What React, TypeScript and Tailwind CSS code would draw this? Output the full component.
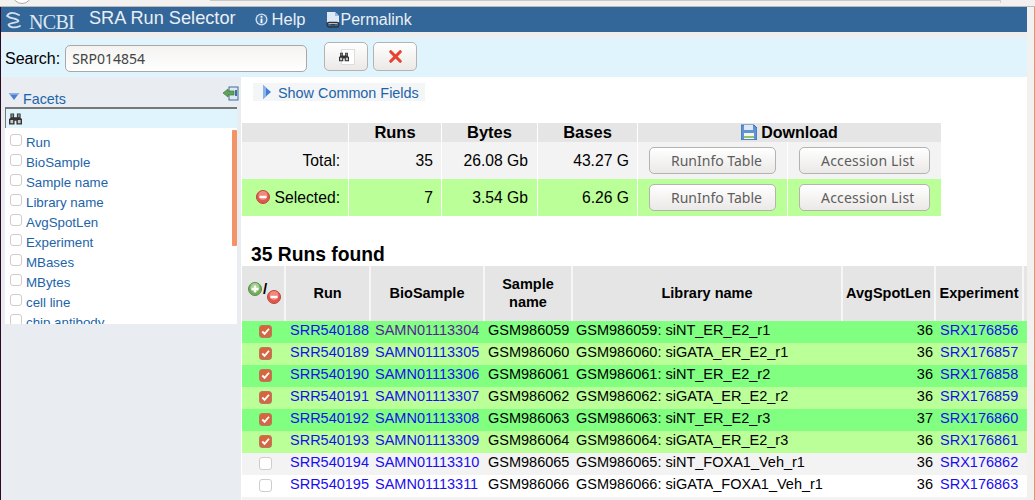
import { X } from "lucide-react";

const facets = ["Run", "BioSample", "Sample name", "Library name", "AvgSpotLen", "Experiment", "MBases", "MBytes", "cell line", "chip antibody"];

const runs = [
  { run: "SRR540188", bio: "SAMN01113304", gsm: "GSM986059", lib: "siNT_ER_E2_r1", len: 36, exp: "SRX176856", bg: "bg-[#80ff80]", on: true, visited: true },
  { run: "SRR540189", bio: "SAMN01113305", gsm: "GSM986060", lib: "siGATA_ER_E2_r1", len: 36, exp: "SRX176857", bg: "bg-[#bbff99]", on: true },
  { run: "SRR540190", bio: "SAMN01113306", gsm: "GSM986061", lib: "siNT_ER_E2_r2", len: 36, exp: "SRX176858", bg: "bg-[#80ff80]", on: true },
  { run: "SRR540191", bio: "SAMN01113307", gsm: "GSM986062", lib: "siGATA_ER_E2_r2", len: 36, exp: "SRX176859", bg: "bg-[#bbff99]", on: true },
  { run: "SRR540192", bio: "SAMN01113308", gsm: "GSM986063", lib: "siNT_ER_E2_r3", len: 37, exp: "SRX176860", bg: "bg-[#80ff80]", on: true },
  { run: "SRR540193", bio: "SAMN01113309", gsm: "GSM986064", lib: "siGATA_ER_E2_r3", len: 36, exp: "SRX176861", bg: "bg-[#bbff99]", on: true },
  { run: "SRR540194", bio: "SAMN01113310", gsm: "GSM986065", lib: "siNT_FOXA1_Veh_r1", len: 36, exp: "SRX176862", bg: "bg-[#f3f3f3]", on: false },
  { run: "SRR540195", bio: "SAMN01113311", gsm: "GSM986066", lib: "siGATA_FOXA1_Veh_r1", len: 36, exp: "SRX176863", bg: "bg-white", on: false },
  { run: "", bio: "", gsm: "", lib: "", len: 0, exp: "", bg: "bg-[#f3f3f3]", on: false, spacer: true },
];

function Binoculars({ className }: { className?: string }) {
  return (
    <svg viewBox="0 0 14 12" className={className}>
      <path d="M1.500 0h4v4h3V0h4v5L14 6v6H8V8H6v4H0V6l1.500-1z" fill="#333333" />
      <path d="M2.500 1h2v3h-2zM9.500 1h2v3h-2z" fill="#8a8a8a" />
      <path d="M1.500 7h3v3.500h-3zM9.500 7h3v3.500h-3z" fill="#c8c8c8" />
    </svg>
  );
}

function MinusCircle({ className }: { className?: string }) {
  return (
    <svg viewBox="0 0 14 14" className={className}>
      <circle cx="7" cy="7" r="6.500" fill="#e2574c" stroke="#b8483f" />
      <circle cx="7" cy="5.500" r="4.500" fill="#f08a80" />
      <rect x="3.500" y="5.800" width="7" height="2.400" fill="#fff" />
    </svg>
  );
}

function PlusCircle({ className }: { className?: string }) {
  return (
    <svg viewBox="0 0 14 14" className={className}>
      <circle cx="7" cy="7" r="6.500" fill="#72ad5c" stroke="#5b8e48" />
      <circle cx="7" cy="5.500" r="4.500" fill="#a5cf92" />
      <path d="M5.800 3.500h2.400v2.300h2.300v2.400H8.200v2.300H5.800V8.200H3.500V5.800h2.300z" fill="#fff" />
    </svg>
  );
}

function Check({ on }: { on: boolean }) {
  if (!on) {
    return <span className="block w-[13px] h-[13px] mx-auto rounded-[3px] bg-white border border-[#cfcdca]" />;
  }
  return (
    <span className="flex items-center justify-center w-[13px] h-[13px] mx-auto rounded-[3px] bg-gradient-to-b from-[#d9643a] to-[#cf6a45] border border-[#b9795f]">
      <svg viewBox="0 0 12 12" className="w-[11px] h-[11px]">
        <path d="M2.500 6l2.500 2.500L9.800 3" fill="none" stroke="#fff" strokeWidth="2" />
      </svg>
    </span>
  );
}

function DownloadButton({ label, wide }: { label: string; wide?: boolean }) {
  return (
    <button className={`block h-[27px] ${wide ? "w-[131px] tracking-[0.2px]" : "w-[127px]"} rounded-[5px] border border-[#b5b3b0] bg-gradient-to-b from-white to-[#ebe9e7] text-[14px] whitespace-nowrap text-[#5e5e5e] pl-[21px] text-left [font-family:'Noto_Sans',sans-serif]`}>
      {label}
    </button>
  );
}

export default function App() {
  return (
    <div className="w-[1035px] h-[500px] overflow-hidden bg-[#f2f1ef] text-black [font-family:'Liberation_Sans',Arial,sans-serif]">
      {/* browser strip */}
      <div className="relative h-[7px] border-b border-[#bdbbb8] overflow-hidden">
        <div className="absolute left-[12px] -top-[16px] w-[20px] h-[20px] rounded-full border border-[#a8a8a8] bg-white" />
        <div className="absolute left-[210px] top-0 w-[790px] h-px bg-[#c8c8c8]" />
        <div className="absolute left-[1000px] top-0 w-px h-[3px] bg-[#d0d0d0]" />
      </div>

      <div className="flex h-[493px]">
        <div className="w-px bg-[#2c0a26]" />
        <div className="w-[1026px] flex flex-col bg-white">
          {/* top bar */}
          <div className="h-[25px] bg-[#336699] flex items-center text-[#e9eff5] shrink-0">
            <svg viewBox="0 0 15 17" className="ml-[5px] w-[15px] h-[17px] relative top-[1px]" fill="none" stroke="#d5e1ec" strokeWidth="1.700" strokeLinecap="round">
              <path d="M1 4C3 0 8 .5 13 3" />
              <path d="M2 4.500C5 7 11 6 12.500 9 12 11 5 10 2.500 12.500 3 15.500 9 16.500 14 14" />
            </svg>
            <span className="ml-[8px] text-[20px] leading-none tracking-[-0.7px] [font-family:'Liberation_Serif',serif] text-[#dfe8f0] relative top-[2px]">NCBI</span>
            <span className="ml-[15px] text-[18.200px] leading-none relative -top-[1px]">SRA Run Selector</span>
            <svg viewBox="0 0 14 14" className="ml-[19px] w-[13px] h-[13px]">
              <circle cx="7" cy="7" r="6.500" fill="#cfe0f0" />
              <circle cx="7" cy="7" r="5" fill="#3f75a8" />
              <rect x="6" y="6" width="2" height="5" fill="#fff" />
              <rect x="6" y="3" width="2" height="2" fill="#fff" />
            </svg>
            <span className="ml-[4px] text-[16.500px] leading-none">Help</span>
            <svg viewBox="0 0 14 16" className="ml-[20px] w-[14px] h-[16px]">
              <path d="M1 0h8l4 4v8H1z" fill="#dfe9f5" />
              <path d="M9 0l4 4H9z" fill="#9fb8d6" />
              <rect x="1" y="10.500" width="12" height="4.500" rx="2.200" fill="none" stroke="#333" strokeWidth="1.300" />
              <rect x="5" y="12.200" width="4" height="1" fill="#333" />
            </svg>
            <span className="ml-[1px] text-[16px] leading-none">Permalink</span>
          </div>
          <div className="h-[6px] bg-[#eeeeee] shrink-0" />

          {/* search bar */}
          <div className="h-[39px] bg-[#e0f4fe] flex items-center shrink-0 pl-[4px]">
            <span className="text-[16px] leading-none relative top-px">Search:</span>
            <input
              readOnly
              value="SRP014854"
              className="ml-[5px] w-[242px] h-[27px] rounded-[5px] border border-[#aaa8a5] bg-gradient-to-b from-[#f4f3f1] to-white px-[6px] text-[14px] text-[#444] outline-none relative top-[1px] [font-family:'Noto_Sans',sans-serif]"
            />
            <button className="ml-[17px] w-[44px] h-[29px] rounded-[5px] border border-[#b5b3b0] bg-gradient-to-b from-white to-[#ebe9e7] flex items-center justify-center relative top-[-1px]">
              <span className="relative flex items-center w-[14px] h-[16px] ml-[3px] bg-white border border-[#dddddd]">
                <Binoculars className="w-[10px] h-[10px] -ml-[3px] shrink-0" />
              </span>
            </button>
            <button className="ml-[5px] w-[44px] h-[29px] rounded-[5px] border border-[#b5b3b0] bg-gradient-to-b from-white to-[#ebe9e7] flex items-center justify-center relative top-[-1px]">
              <X className="w-[19px] h-[19px] text-[#e8432f]" strokeWidth={4} />
            </button>
          </div>

          <div className="flex flex-1 min-h-0">
            {/* facets sidebar */}
            <div className="w-[240px] bg-[#e9edf1] shrink-0 flex flex-col">
              <div className="h-[30px] relative flex items-end pl-[7px]">
                <svg viewBox="0 0 12 8" className="w-[12px] h-[7px] mb-[7px]">
                  <path d="M0 0h12L6 8z" fill="#4a7fd0" />
                  <path d="M0 0h12L10 2H2z" fill="#8db0e6" />
                </svg>
                <span className="ml-[3px] text-[14.300px] leading-[17px] text-[#1c64aa] -mb-[1px]">Facets</span>
                <svg viewBox="0 0 16 15" className="absolute left-[222px] top-[9px] w-[16px] h-[15px]">
                  <rect x="6" y="1" width="9" height="13" fill="#dfe8f2" stroke="#3d6f9f" />
                  <path d="M0 7l5-4v2h6v4H5v2z" fill="#5fa35a" stroke="#3c7a3a" strokeWidth="0.700" />
                  <rect x="12" y="4" width="2" height="6" fill="#3d6f9f" />
                </svg>
              </div>
              <div className="ml-[4px] w-[232px] h-[21px] bg-[#e0f4fe] border-t-2 border-l border-[#777777] flex items-center pl-[3px]">
                <Binoculars className="w-[13px] h-[12px]" />
              </div>
              <div className="relative ml-[4px] w-[232px] h-[196px] bg-white overflow-hidden">
                <div className="absolute right-0 top-[2px] w-[5px] h-[116px] rounded-[1px] bg-[#f49368]" />
                <div className="pt-[4px]">
                  {facets.map((f) => (
                    <div key={f} className="flex h-[20px] items-center pl-[5px]">
                      <span className="block w-[12px] h-[12px] shrink-0 rounded-[3px] border border-[#cfcdca] bg-white relative -top-[2px]" />
                      <span className="ml-[4px] text-[13.300px] leading-none text-[#1c64aa] relative top-px">{f}</span>
                    </div>
                  ))}
                </div>
              </div>
            </div>

            {/* main content */}
            <div className="flex-1 min-w-0 pl-px overflow-hidden">
              <div className="mt-[6px] ml-[11px] w-[172px] h-[18px] bg-[#f4f5f6] flex items-center pl-[10px]">
                <svg viewBox="0 0 8 14" className="w-[8px] h-[14px]">
                  <path d="M0 0l8 7-8 7z" fill="#3f7fd6" />
                  <path d="M0 0l3 2.500v9L0 14z" fill="#8db4ea" />
                </svg>
                <span className="ml-[7px] text-[14.400px] leading-none text-[#1c64aa] relative top-px">Show Common Fields</span>
              </div>

              {/* totals */}
              <table className="mt-[22px] w-[699px] table-fixed border-separate border-spacing-0">
                <colgroup>
                  <col className="w-[107px]" />
                  <col className="w-[93px]" />
                  <col className="w-[96px]" />
                  <col className="w-[100px]" />
                  <col className="w-[150px]" />
                  <col className="w-[153px]" />
                </colgroup>
                <thead>
                  <tr className="h-[19px] bg-[#e5e5e5] text-[16.500px] leading-none font-bold">
                    <th className="border-r border-white" />
                    <th className="border-r border-white">Runs</th>
                    <th className="border-r border-white">Bytes</th>
                    <th className="border-r border-white">Bases</th>
                    <th colSpan={2} className="text-[16px]">
                      <span className="flex items-center justify-center">
                        <svg viewBox="0 0 16 16" className="w-[16px] h-[16px] mr-[4px] -mt-[2px]">
                          <path d="M0 1h13l3 3v12H0z" fill="#5f93d6" stroke="#3c6cae" />
                          <rect x="3" y="1" width="9" height="5" fill="#dde9f7" />
                          <rect x="3" y="9" width="10" height="6" fill="#f3f6e8" />
                          <rect x="3" y="12" width="10" height="2" fill="#8fc36b" />
                        </svg>
                        Download
                      </span>
                    </th>
                  </tr>
                </thead>
                <tbody className="text-[15.700px] leading-none">
                  <tr className="h-[37px] bg-[#f3f3f3]">
                    <td className="text-right pr-[8px] border-r border-white">Total:</td>
                    <td className="text-right pr-[8px] border-r border-white">35</td>
                    <td className="text-right pr-[9px] border-r border-white">26.08 Gb</td>
                    <td className="text-right pr-[8px] border-r border-white">43.27 G</td>
                    <td className="pl-[11px] border-r border-white"><DownloadButton label="RunInfo Table" /></td>
                    <td className="pl-[11px]"><DownloadButton label="Accession List" wide /></td>
                  </tr>
                  <tr className="h-[37px] bg-[#bbff99]">
                    <td className="text-right pr-[8px] border-r border-white">
                      <span className="flex items-center justify-end">
                        <MinusCircle className="w-[14px] h-[14px] mr-[5px]" />
                        Selected:
                      </span>
                    </td>
                    <td className="text-right pr-[8px] border-r border-white">7</td>
                    <td className="text-right pr-[9px] border-r border-white">3.54 Gb</td>
                    <td className="text-right pr-[8px] border-r border-white">6.26 G</td>
                    <td className="pl-[11px] border-r border-white"><DownloadButton label="RunInfo Table" /></td>
                    <td className="pl-[11px]"><DownloadButton label="Accession List" wide /></td>
                  </tr>
                </tbody>
              </table>

              <h2 className="mt-[28px] ml-[9px] h-[22px] text-[19.300px] leading-[21px] font-bold">35 Runs found</h2>

              {/* runs */}
              <table className="w-[785px] table-fixed border-separate border-spacing-0 text-[14.500px] leading-none">
                <colgroup>
                  <col className="w-[44px]" />
                  <col className="w-[85px]" />
                  <col className="w-[114px]" />
                  <col className="w-[88px]" />
                  <col className="w-[270px]" />
                  <col className="w-[93px]" />
                  <col className="w-[88px]" />
                  <col className="w-[3px]" />
                </colgroup>
                <thead>
                  <tr className="h-[55px] bg-[#e5e5e5] font-bold text-[14.500px] leading-[18px]">
                    <th className="border-r-2 border-[#f6f6f6] pb-[2px]">
                      <span className="flex items-start justify-center h-[24px] pl-[3px] mt-[2px]">
                        <PlusCircle className="w-[14px] h-[14px]" />
                        <span className="font-bold text-[15px] leading-[14px] ml-[1px]">/</span>
                        <MinusCircle className="w-[14px] h-[14px] mt-[8px]" />
                      </span>
                    </th>
                    <th className="border-r-2 border-[#f6f6f6] pb-[2px]">Run</th>
                    <th className="border-r-2 border-[#f6f6f6] pb-[2px]">BioSample</th>
                    <th className="border-r-2 border-[#f6f6f6] pb-[2px]">Sample<br />name</th>
                    <th className="border-r-2 border-[#f6f6f6] pb-[2px]">Library name</th>
                    <th className="border-r-2 border-[#f6f6f6] pb-[2px] text-center whitespace-nowrap">AvgSpotLen</th>
                    <th className="border-r-2 border-[#f6f6f6] pb-[2px]">Experiment</th>
                    <th />
                  </tr>
                </thead>
                <tbody>
                  {runs.map((r) => (
                    <tr key={r.exp || "spacer"} className={`h-[22px] ${r.bg}`}>
                      {r.spacer ? (
                        <td colSpan={8} />
                      ) : (
                        <>
                          <td className="pb-[2px]"><span className="block pl-[2px]"><Check on={r.on} /></span></td>
                          <td className="pl-[4px] pb-[4px] text-[#1a0df0]">{r.run}</td>
                          <td className={`pl-[4px] pb-[4px] ${r.visited ? "text-[#5a1e96]" : "text-[#1a0df0]"}`}>{r.bio}</td>
                          <td className="pl-[3px] pb-[4px]">{r.gsm}</td>
                          <td className="pl-[3px] pb-[4px] whitespace-nowrap">{r.gsm}: {r.lib}</td>
                          <td className="text-right pr-[3px] pb-[4px]">{r.len}</td>
                          <td colSpan={2} className="pl-[4px] pb-[4px] text-[#1a0df0]">{r.exp}</td>
                        </>
                      )}
                    </tr>
                  ))}
                </tbody>
              </table>
            </div>
          </div>
        </div>
        <div className="w-[7px] bg-[#f2f1ef]" />
        <div className="w-px bg-[#e8946a]" />
      </div>
    </div>
  );
}
